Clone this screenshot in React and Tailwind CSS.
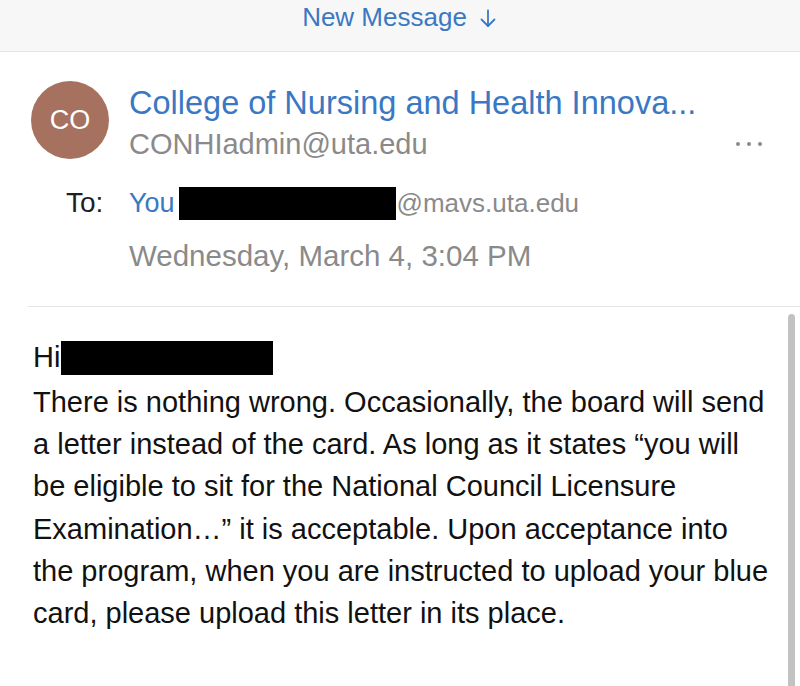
export default function App() {
  const lines = [
    'There is nothing wrong. Occasionally, the board will send',
    'a letter instead of the card. As long as it states \u201cyou will',
    'be eligible to sit for the National Council Licensure',
    'Examination\u2026\u201d it is acceptable. Upon acceptance into',
    'the program, when you are instructed to upload your blue',
    'card, please upload this letter in its place.',
  ]

  return (
    <div className="relative w-[800px] h-[686px] overflow-hidden bg-white font-['Liberation_Sans',Arial,sans-serif]">
      {/* top bar */}
      <div className="h-[52px] bg-[#f7f7f7] border-b border-[#e4e4e4] flex items-start justify-center pt-[2px]">
        <span className="text-[26px] leading-[30px] text-[#3a78c3] ml-[-2px]">New Message</span>
        <svg className="ml-[13px] mt-[7px]" width="16" height="19" viewBox="0 0 16 19" fill="none" stroke="#3a78c3" strokeWidth="1.8" strokeLinecap="round" strokeLinejoin="round">
          <path d="M8 1.5v15.5" />
          <path d="M1.5 10.5L8 17l6.5-6.5" />
        </svg>
      </div>

      {/* sender */}
      <div className="flex items-start pl-[31px] pt-[29px]">
        <div className="w-[78px] h-[78px] rounded-full bg-[#a6725f] flex items-center justify-center shrink-0">
          <span className="text-white text-[27px] leading-none">CO</span>
        </div>
        <div className="ml-[20px] mt-[3px] flex-1 min-w-0">
          <div className="text-[32.5px] leading-[38px] text-[#3a78c3] whitespace-nowrap">
            College of Nursing and Health Innova...
          </div>
          <div className="flex items-center justify-between pr-[38px] mt-[4px]">
            <span className="text-[29px] leading-[36px] text-[#8a8a8a]">CONHIadmin@uta.edu</span>
            <span className="flex gap-[7px]">
              <span className="w-[4px] h-[4px] rounded-full bg-[#8a8a8a]"></span>
              <span className="w-[4px] h-[4px] rounded-full bg-[#8a8a8a]"></span>
              <span className="w-[4px] h-[4px] rounded-full bg-[#8a8a8a]"></span>
            </span>
          </div>
        </div>
      </div>

      {/* recipients */}
      <div className="flex items-center mt-[23px] h-[36px]">
        <span className="w-[129px] pl-[66px] text-[28px] text-[#1f1f1f]">To:</span>
        <span className="text-[27px] text-[#3a78c3]">You</span>
        <span className="ml-[4px] w-[217px] h-[33px] bg-black"></span>
        <span className="ml-[1px] text-[26px] text-[#8a8a8a]">@mavs.uta.edu</span>
      </div>
      <div className="pl-[129px] mt-[17px] text-[29.5px] leading-[36px] text-[#8a8a8a]">
        Wednesday, March 4, 3:04 PM
      </div>

      <div className="ml-[28px] mt-[32px] border-t border-[#e6e6e6]"></div>

      {/* body */}
      <div className="pl-[33px] pt-[30px] text-[29px] text-[#111]">
        <div className="flex items-center h-[42px]">
          <span>Hi</span>
          <span className="ml-[1px] w-[212px] h-[34px] bg-black"></span>
        </div>
        <div className="mt-[2px]">
          {lines.map((l, i) => (
            <div key={i} className="leading-[42.2px] whitespace-nowrap">{l}</div>
          ))}
        </div>
      </div>

      {/* scrollbar */}
      <div className="absolute right-[5px] top-[314px] w-[7px] h-[380px] rounded-full bg-[#c2c2c2]"></div>
    </div>
  )
}
